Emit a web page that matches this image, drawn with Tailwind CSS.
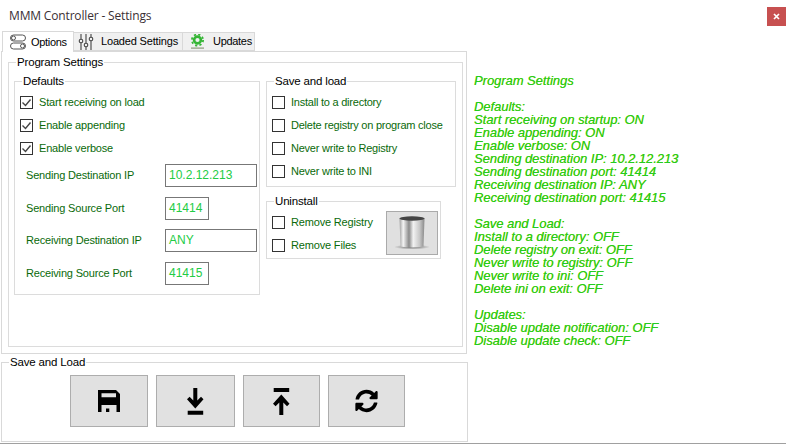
<!DOCTYPE html>
<html lang="en">
<head>
    <meta charset="UTF-8">
    <title>MMM Controller - Settings</title>
    <script src="https://cdn.jsdelivr.net/npm/@tailwindcss/browser@4"></script>
</head>
<body class="bg-white overflow-hidden">
    <div class="w-[786px] h-[444px] flex flex-col bg-white border-b border-[#a0a0a0] font-['Liberation_Sans',sans-serif] text-[11px] tracking-[-0.17px] overflow-hidden">
        <!-- Title bar -->
        <div class="h-[31px] shrink-0 flex items-start justify-between">
            <div class="pl-[9px] pt-[7px] text-[12px] tracking-[-0.16px] leading-[18px] text-[#3a2f35] font-['Open_Sans',sans-serif]">MMM Controller - Settings</div>
            <div class="mt-[7px] w-[19px] h-[19px] bg-[#c75050] flex items-center justify-center text-white">
                <svg width="7" height="7" viewBox="0 0 7 7"><path d="M1 1l5 5M6 1l-5 5" stroke="#fff" stroke-width="1.7" fill="none"/></svg>
            </div>
        </div>

        <div class="flex flex-1 min-h-0">
            <div class="w-[470px] shrink-0">
                <!-- Tabs -->
                <div class="flex items-end h-[21px] pl-[2px] relative z-10">
                    <div class="w-[72px] h-[21px] bg-white border border-b-0 border-[#d9d9d9] flex items-center pl-[7px] gap-[5px] text-black tracking-[-0.3px]">
                        <svg width="16" height="16" viewBox="0 0 16 16" fill="none" stroke="#555" stroke-width="1" class="shrink-0"><rect x="0.500" y="1" width="15" height="6" rx="3"/><circle cx="3.500" cy="4" r="2"/><rect x="0.500" y="9" width="15" height="6" rx="3"/><circle cx="12.500" cy="12" r="2"/></svg>
                        <span>Options</span>
                    </div>
                    <div class="w-[109px] h-[19px] mb-[1px] bg-[#f0f0f0] border border-l-0 border-[#d9d9d9] flex items-center pl-[4px] gap-[7px] text-black">
                        <svg width="16" height="16" viewBox="0 0 16 16" fill="none" stroke="#444" stroke-width="1.100" class="shrink-0"><path d="M3 0v5M3 9v7M8 0v9M8 13v3M13 0v3M13 7v9"/><circle cx="3" cy="7" r="1.800"/><circle cx="8" cy="11" r="1.800"/><circle cx="13" cy="5" r="1.800"/></svg>
                        <span>Loaded Settings</span>
                    </div>
                    <div class="w-[72px] h-[19px] mb-[1px] bg-[#f0f0f0] border border-l-0 border-[#d9d9d9] flex items-center pl-[8px] gap-[9px] text-black tracking-[-0.3px]">
                        <svg width="13" height="15" viewBox="0 0 13 15" fill="none" class="shrink-0"><circle cx="6.500" cy="6" r="3.400" stroke="#35b535" stroke-width="2.600"/><circle cx="6.500" cy="6" r="5.600" stroke="#35b535" stroke-width="1.800" stroke-dasharray="2.200 2.200"/><rect x="0" y="13.500" width="13" height="1.200" fill="#8a9a7a"/></svg>
                        <span>Updates</span>
                    </div>
                </div>

                <!-- Tab page -->
                <div class="ml-[1px] w-[466px] h-[303px] -mt-[1px] border border-[#d9d9d9] pl-[6px] pt-[3px]">
                    <fieldset class="w-[455px] h-[292px] border border-[#dcdcdc] pl-[5px] pr-[5px]">
                        <legend class="ml-[2px] px-[1px] leading-[14px] text-black text-[11.500px]">Program Settings</legend>
                        <div class="flex gap-[6px] mt-[5px]">
                            <div class="flex flex-col">
                                <!-- Defaults -->
                                <fieldset class="w-[246px] h-[221px] border border-[#dcdcdc] pl-[5px]">
                                    <legend class="ml-[2px] px-[1px] leading-[14px] text-black text-[11.500px]">Defaults</legend>
                                    <div class="flex flex-col gap-[10px] mt-[8px]">
                                        <label class="flex items-center gap-[6px] h-[13px] text-[#0a6a0a]"><svg width="13" height="13" viewBox="0 0 13 13" class="shrink-0"><rect x="0.500" y="0.500" width="12" height="12" fill="#fff" stroke="#333"/><path d="M2.500 6.500l3 3 5-6" fill="none" stroke="#444" stroke-width="1.400"/></svg>Start receiving on load</label>
                                        <label class="flex items-center gap-[6px] h-[13px] text-[#0a6a0a]"><svg width="13" height="13" viewBox="0 0 13 13" class="shrink-0"><rect x="0.500" y="0.500" width="12" height="12" fill="#fff" stroke="#333"/><path d="M2.500 6.500l3 3 5-6" fill="none" stroke="#444" stroke-width="1.400"/></svg>Enable appending</label>
                                        <label class="flex items-center gap-[6px] h-[13px] text-[#0a6a0a]"><svg width="13" height="13" viewBox="0 0 13 13" class="shrink-0"><rect x="0.500" y="0.500" width="12" height="12" fill="#fff" stroke="#333"/><path d="M2.500 6.500l3 3 5-6" fill="none" stroke="#444" stroke-width="1.400"/></svg>Enable verbose</label>
                                    </div>
                                    <div class="flex flex-col gap-[9.500px] mt-[9px] pl-[6px] text-[#0a6a0a]">
                                        <div class="flex items-center h-[23px]"><span class="w-[139px]">Sending Destination IP</span><span class="w-[92px] h-[23px] border border-[#777] pl-[3px] text-[12px] tracking-normal leading-[21px] text-[#22cc44]">10.2.12.213</span></div>
                                        <div class="flex items-center h-[23px]"><span class="w-[139px]">Sending Source Port</span><span class="w-[44px] h-[23px] border border-[#777] pl-[3px] text-[12px] tracking-normal leading-[21px] text-[#22cc44]">41414</span></div>
                                        <div class="flex items-center h-[23px]"><span class="w-[139px]">Receiving Destination IP</span><span class="w-[92px] h-[23px] border border-[#777] pl-[3px] text-[12px] tracking-normal leading-[21px] text-[#22cc44]">ANY</span></div>
                                        <div class="flex items-center h-[23px]"><span class="w-[139px]">Receiving Source Port</span><span class="w-[44px] h-[23px] border border-[#777] pl-[3px] text-[12px] tracking-normal leading-[21px] text-[#22cc44]">41415</span></div>
                                    </div>
                                </fieldset>
                            </div>
                            <div class="flex flex-col gap-[7px]">
                                <!-- Save and load -->
                                <fieldset class="w-[190px] h-[113px] border border-[#dcdcdc] pl-[5px]">
                                    <legend class="ml-[2px] px-[1px] leading-[14px] text-black text-[11.500px]">Save and load</legend>
                                    <div class="flex flex-col gap-[10px] mt-[8px] text-[#0a6a0a] tracking-[-0.23px]">
                                        <label class="flex items-center gap-[6px] h-[13px]"><span class="w-[13px] h-[13px] border border-[#333] shrink-0"></span>Install to a directory</label>
                                        <label class="flex items-center gap-[6px] h-[13px]"><span class="w-[13px] h-[13px] border border-[#333] shrink-0"></span>Delete registry on program close</label>
                                        <label class="flex items-center gap-[6px] h-[13px]"><span class="w-[13px] h-[13px] border border-[#333] shrink-0"></span>Never write to Registry</label>
                                        <label class="flex items-center gap-[6px] h-[13px]"><span class="w-[13px] h-[13px] border border-[#333] shrink-0"></span>Never write to INI</label>
                                    </div>
                                </fieldset>
                                <!-- Uninstall -->
                                <fieldset class="w-[175px] h-[65px] border border-[#dcdcdc] pl-[5px]">
                                    <legend class="ml-[2px] px-[1px] leading-[14px] text-black text-[11.500px]">Uninstall</legend>
                                    <div class="flex justify-between pr-[2px]">
                                        <div class="flex flex-col gap-[10px] mt-[8px] text-[#0a6a0a]">
                                            <label class="flex items-center gap-[6px] h-[13px]"><span class="w-[13px] h-[13px] border border-[#333] shrink-0"></span>Remove Registry</label>
                                            <label class="flex items-center gap-[6px] h-[13px]"><span class="w-[13px] h-[13px] border border-[#333] shrink-0"></span>Remove Files</label>
                                        </div>
                                        <div class="mt-[3px] w-[52px] h-[44px] bg-[#e0e0e0] border border-[#aaa] flex items-center justify-center">
                                            <svg width="40" height="40" viewBox="0 0 40 40">
                                                <defs>
                                                    <linearGradient id="bin" x1="0" x2="1" y1="0" y2="0">
                                                        <stop offset="0" stop-color="#a0a0a0"/><stop offset="0.150" stop-color="#f4f4f4"/><stop offset="0.380" stop-color="#8a8a8a"/><stop offset="0.550" stop-color="#f2f2f2"/><stop offset="0.800" stop-color="#c8c8c8"/><stop offset="1" stop-color="#8a8a8a"/>
                                                    </linearGradient>
                                                    <radialGradient id="shadow"><stop offset="0" stop-color="#666"/><stop offset="1" stop-color="#e0e0e0"/></radialGradient>
                                                </defs>
                                                <ellipse cx="20" cy="34" rx="18" ry="2.500" fill="url(#shadow)"/>
                                                <path d="M7.500 5.500l1 28q11.500 2 23 0l1-28z" fill="url(#bin)"/>
                                                <ellipse cx="20" cy="5.500" rx="12.500" ry="2.200" fill="#444"/>
                                            </svg>
                                        </div>
                                    </div>
                                </fieldset>
                            </div>
                        </div>
                    </fieldset>
                </div>

                <!-- Save and Load buttons -->
                <fieldset class="ml-[1px] mt-[1px] w-[467px] h-[87px] border border-[#d9d9d9]">
                    <legend class="ml-[7px] px-[1px] leading-[14px] text-black text-[11.500px]">Save and Load</legend>
                    <div class="flex pl-[68px] mt-[6px]">
                        <button class="w-[78px] h-[52px] bg-[#e1e1e1] border border-[#adadad] flex items-center justify-center">
                            <svg width="22" height="22" viewBox="0 0 22 22"><path fill-rule="evenodd" d="M0 0h18l4 4v18H0zM3.500 3.300v4h14.500v-4zM3.500 15v7h15v-7z" fill="#000"/><rect x="8" y="18.500" width="3.300" height="3.500" fill="#000"/></svg>
                        </button>
                        <button class="ml-[8px] w-[79px] h-[52px] bg-[#e1e1e1] border border-[#adadad] flex items-center justify-center">
                            <svg width="17" height="27" viewBox="0 0 17 27"><path d="M6.300 0h4v12.500l3.700-3.700 2.500 2.500L8.300 20.500 0 11.300l2.600-2.500 3.700 3.700zM0.700 22.700h15.500v4H0.700z" fill="#000"/></svg>
                        </button>
                        <button class="ml-[8px] w-[77px] h-[52px] bg-[#e1e1e1] border border-[#adadad] flex items-center justify-center">
                            <svg width="17" height="27" viewBox="0 0 17 27"><path d="M0.700 0h15.500v4H0.700zM6.300 27h4V14.500l3.700 3.700 2.500-2.500L8.300 6.500 0 15.700l2.600 2.500 3.700-3.700z" fill="#000"/></svg>
                        </button>
                        <button class="ml-[8px] w-[77px] h-[52px] bg-[#e1e1e1] border border-[#adadad] flex items-center justify-center">
                            <svg width="23" height="24" viewBox="0 0 512 512"><path d="M370.720 133.280C339.458 104.008 298.888 87.962 255.848 88c-77.458.068-144.328 53.178-162.791 126.850-1.344 5.363-6.122 9.150-11.651 9.150H24.103c-7.498 0-13.194-6.807-11.807-14.176C33.933 94.924 134.813 8 256 8c66.448 0 126.791 26.136 171.315 68.685L463.030 40.970C478.149 25.851 504 36.559 504 57.941V192c0 13.255-10.745 24-24 24H345.941c-21.382 0-32.090-25.851-16.971-40.971l41.750-41.749zM32 296h134.059c21.382 0 32.090 25.851 16.971 40.971l-41.750 41.750c31.262 29.273 71.835 45.319 114.876 45.280 77.418-.07 144.315-53.144 162.787-126.849 1.344-5.363 6.122-9.150 11.651-9.150h57.304c7.498 0 13.194 6.807 11.807 14.176C478.067 417.076 377.187 504 256 504c-66.448 0-126.791-26.136-171.315-68.685L48.970 471.030C33.851 486.149 8 475.441 8 454.059V320c0-13.255 10.745-24 24-24z" fill="#000"/></svg>
                        </button>
                    </div>
                </fieldset>
            </div>

            <!-- Settings summary -->
            <div class="pl-[4px] pt-[43px] italic text-[12.900px] tracking-normal leading-[13px] text-[#22cc22] [text-shadow:0.3px_0_0_#a8d800] whitespace-pre">Program Settings

Defaults:
Start receiving on startup: ON
Enable appending: ON
Enable verbose: ON
Sending destination IP: 10.2.12.213
Sending destination port: 41414
Receiving destination IP: ANY
Receiving destination port: 41415

Save and Load:
Install to a directory: OFF
Delete registry on exit: OFF
Never write to registry: OFF
Never write to ini: OFF
Delete ini on exit: OFF

Updates:
Disable update notification: OFF
Disable update check: OFF</div>
        </div>
    </div>
</body>
</html>
